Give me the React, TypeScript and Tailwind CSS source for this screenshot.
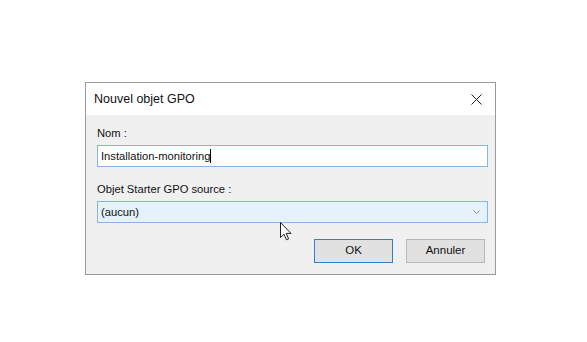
import React from "react";

export default function App() {
  return (
    <div className="relative w-[587px] h-[342px] bg-white pt-[82px] pl-[85px]" style={{ fontFamily: '"Liberation Sans", Arial, sans-serif' }}>
      <div className="w-[411px] h-[193px] border border-[#9a9a9a] flex flex-col bg-[#f0f0f0]">
        <div className="h-[32px] bg-white flex items-center justify-between pl-[8px] pr-[10px]">
          <span className="text-[12.5px] text-[#111]">Nouvel objet GPO</span>
          <svg width="11" height="11" viewBox="0 0 11 11" className="mr-[3px]">
            <path d="M0.5 0.5 L10.5 10.5 M10.5 0.5 L0.5 10.5" stroke="#222" strokeWidth="1" fill="none" />
          </svg>
        </div>
        <div className="flex-1 flex flex-col pt-[11px] pl-[11px] pr-[7px] text-[11.2px] text-[#111]">
          <div className="h-[15px] leading-[15px] mb-[4px]">Nom :</div>
          <div className="h-[22px] border border-[#86b4e3] bg-white flex items-center pl-[3px]">
            <span>Installation-monitoring</span>
            <span className="w-[1px] h-[14px] bg-black"></span>
          </div>
          <div className="h-[15px] leading-[15px] mt-[15px] mb-[4px]">Objet Starter GPO source :</div>
          <div className="h-[22px] border border-[#86b4e3] bg-[#e5f1fb] flex items-center justify-between pl-[3px] pr-[7px]">
            <span>(aucun)</span>
            <svg width="7" height="4" viewBox="0 0 7 4">
              <path d="M0.5 0.5 L3.5 3.5 L6.5 0.5" stroke="#8a8a8a" strokeWidth="1" fill="none" />
            </svg>
          </div>
          <div className="flex justify-end gap-[13px] mt-[16px] pr-[3px] text-[11.5px]">
            <div className="w-[79px] h-[24px] border border-[#2f7fd4] bg-[#e1e1e1] flex items-center justify-center">OK</div>
            <div className="w-[79px] h-[24px] border border-[#b8b8b8] bg-[#e1e1e1] flex items-center justify-center">Annuler</div>
          </div>
        </div>
      </div>
      <svg className="absolute left-[280px] top-[222px]" width="12" height="19" viewBox="0 0 12 19">
        <path d="M0.5 0.5 L0.5 15.5 L4 12.2 L6.5 17.8 L8.6 16.9 L6.2 11.4 L11 11.4 Z" fill="white" stroke="#222" strokeWidth="1" strokeLinejoin="round" />
      </svg>
    </div>
  );
}
